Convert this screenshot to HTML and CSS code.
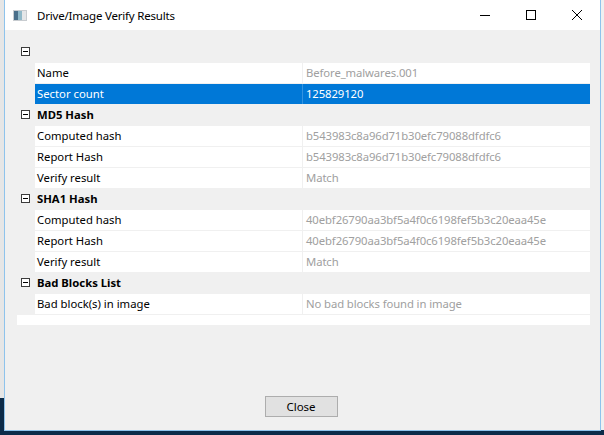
FILE: index.html
```html
<!DOCTYPE html>
<html>
<head>
<meta charset="utf-8">
<link rel="stylesheet" href="styles.css">
</head>
<body>
<div class="desktop">
  <div class="window">
    <div class="titlebar">
      <svg class="appicon" width="14" height="11" viewBox="0 0 14 11">
        <rect x="0" y="0" width="14" height="11" fill="#c8ccd0"/>
        <rect x="1" y="1" width="4" height="9" fill="#4a6f8a"/>
        <rect x="5" y="1" width="4" height="9" fill="#8fb8c8"/>
        <rect x="9" y="1" width="4" height="9" fill="#e4e6e8"/>
      </svg>
      <span class="title">Drive/Image Verify Results</span>
      <div class="controls">
        <div class="ctl"><svg width="12" height="12" viewBox="0 0 12 12"><line x1="1" y1="6.5" x2="11" y2="6.5" stroke="#000" stroke-width="1"/></svg></div>
        <div class="ctl"><svg width="12" height="12" viewBox="0 0 12 12"><rect x="1.5" y="1.5" width="9" height="9" fill="none" stroke="#000" stroke-width="1"/></svg></div>
        <div class="ctl"><svg width="12" height="12" viewBox="0 0 12 12"><path d="M1 1 L11 11 M11 1 L1 11" stroke="#000" stroke-width="1"/></svg></div>
      </div>
    </div>
    <div class="content">
      <div class="grid">
        <div class="cat"><span class="margin"><span class="box"></span></span><span class="catlabel"></span></div>
        <div class="row"><span class="margin"></span><span class="cells"><span class="name">Name</span><span class="value">Before_malwares.001</span></span></div>
        <div class="row sel"><span class="margin"></span><span class="cells"><span class="name">Sector count</span><span class="value">125829120</span></span></div>
        <div class="cat"><span class="margin"><span class="box"></span></span><span class="catlabel">MD5 Hash</span></div>
        <div class="row"><span class="margin"></span><span class="cells"><span class="name">Computed hash</span><span class="value">b543983c8a96d71b30efc79088dfdfc6</span></span></div>
        <div class="row"><span class="margin"></span><span class="cells"><span class="name">Report Hash</span><span class="value">b543983c8a96d71b30efc79088dfdfc6</span></span></div>
        <div class="row"><span class="margin"></span><span class="cells"><span class="name">Verify result</span><span class="value">Match</span></span></div>
        <div class="cat"><span class="margin"><span class="box"></span></span><span class="catlabel">SHA1 Hash</span></div>
        <div class="row"><span class="margin"></span><span class="cells"><span class="name">Computed hash</span><span class="value">40ebf26790aa3bf5a4f0c6198fef5b3c20eaa45e</span></span></div>
        <div class="row"><span class="margin"></span><span class="cells"><span class="name">Report Hash</span><span class="value">40ebf26790aa3bf5a4f0c6198fef5b3c20eaa45e</span></span></div>
        <div class="row"><span class="margin"></span><span class="cells"><span class="name">Verify result</span><span class="value">Match</span></span></div>
        <div class="cat"><span class="margin"><span class="box"></span></span><span class="catlabel">Bad Blocks List</span></div>
        <div class="row"><span class="margin"></span><span class="cells"><span class="name">Bad block(s) in image</span><span class="value">No bad blocks found in image</span></span></div>
        <div class="strip"></div>
      </div>
      <div class="footer">
        <button class="btn">Close</button>
      </div>
    </div>
  </div>
</div>
</body>
</html>
```
FILE: styles.css
```css
html, body {
  margin: 0;
  padding: 0;
}
body {
  width: 604px;
  height: 435px;
  overflow: hidden;
  font-family: "Noto Sans", "Open Sans", sans-serif;
}
.desktop {
  width: 604px;
  height: 435px;
  box-sizing: border-box;
  padding-left: 4px;
  background:
    linear-gradient(to bottom, #e6e6e6 0, #e6e6e6 398px, #0c2b49 398px) left top / 4px 435px no-repeat,
    linear-gradient(to bottom, #f0f0f0 0, #f0f0f0 430px, #0c2b49 430px) right top / 4px 435px no-repeat,
    #0c2b49;
}
.window {
  width: 597px;
  height: 431px;
  box-sizing: border-box;
  border: 1px solid #8ec3ec;
  border-top: 0;
  background: #f0f0f0;
  display: flex;
  flex-direction: column;
}
.titlebar {
  height: 30px;
  flex: none;
  background: #fff;
  display: flex;
  align-items: center;
}
.appicon {
  margin-left: 8px;
  margin-right: 10px;
}
.title {
  font-size: 11.5px;
  letter-spacing: -0.2px;
  color: #000;
  flex: 1;
}
.controls {
  display: flex;
  align-self: stretch;
}
.ctl {
  width: 46px;
  display: flex;
  align-items: center;
  justify-content: center;
}
.content {
  flex: 1;
  display: flex;
  flex-direction: column;
  padding: 11px 10px 0 12px;
}
.grid {
  width: 573px;
  font-size: 11.3px;
}
.cat, .row {
  height: 21px;
  display: flex;
}
.margin {
  width: 18px;
  flex: none;
  background: #f0f0f0;
  position: relative;
}
.box {
  position: absolute;
  left: 4px;
  top: 6px;
  width: 7px;
  height: 7px;
  border: 1px solid #3c3c3c;
  background: #fff;
}
.box::after {
  content: "";
  position: absolute;
  left: 1px;
  top: 3px;
  width: 5px;
  height: 1px;
  background: #000;
}
.catlabel {
  flex: 1;
  background: #f0f0f0;
  font-weight: bold;
  line-height: 21px;
  padding-left: 2px;
  color: #000;
}
.cells {
  flex: 1;
  display: flex;
  border-top: 1px solid #f0f0f0;
  background: #fff;
}
.name {
  width: 268px;
  flex: none;
  box-sizing: border-box;
  border-right: 1px solid #f0f0f0;
  line-height: 20px;
  padding-left: 2px;
  color: #000;
}
.value {
  flex: 1;
  line-height: 20px;
  padding-left: 3px;
  color: #a0a0a0;
  letter-spacing: -0.1px;
}
.row.sel .cells {
  background: #0078d7;
}
.row.sel .name {
  color: #fff;
  border-right-color: #3393e0;
}
.row.sel .value {
  color: #fff;
}
.strip {
  height: 10px;
  margin-top: 1px;
  background: #fff;
}
.footer {
  flex: 1;
  display: flex;
  align-items: flex-end;
  justify-content: center;
  padding-bottom: 13px;
  padding-right: 5px;
}
.btn {
  width: 73px;
  height: 21px;
  border: 1px solid #adadad;
  background: #e1e1e1;
  font-family: "Noto Sans", "Open Sans", sans-serif;
  font-size: 11.5px;
  color: #000;
  padding: 0;
}
```
